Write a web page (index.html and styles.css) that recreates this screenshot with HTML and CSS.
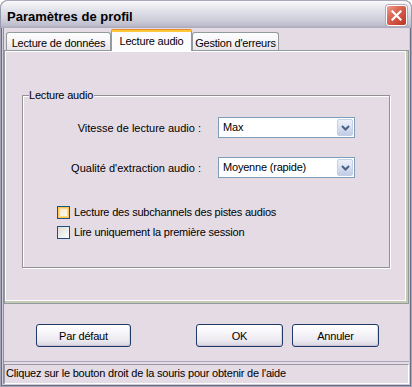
FILE: index.html
```
<!DOCTYPE html>
<html lang="fr">
<head>
<meta charset="utf-8">
<title>Paramètres de profil</title>
<link rel="stylesheet" href="styles.css">
</head>
<body>
<div class="window">
  <div class="titlebar">
    <span class="title">Paramètres de profil</span>
    <span class="close">
      <svg width="11" height="11" viewBox="0 0 11 11"><path d="M1.5 1.5 L9.5 9.5 M9.5 1.5 L1.5 9.5" stroke="#fff" stroke-width="2.2" stroke-linecap="square" fill="none"/></svg>
    </span>
  </div>
  <div class="frame">
    <div class="tabs">
      <div class="tab tab-data">Lecture de données</div>
      <div class="tab tab-active">Lecture audio</div>
      <div class="tab tab-errors">Gestion d'erreurs</div>
    </div>
    <div class="panel">
      <fieldset class="group">
        <legend class="group-title">Lecture audio</legend>
        <div class="fields">
          <span class="field-label">Vitesse de lecture audio :</span>
          <div class="select">
            <span class="select-value">Max</span>
            <span class="select-btn"><svg width="9" height="6" viewBox="0 0 9 6"><path d="M1 1 L4.5 4.5 L8 1" stroke="#4d6185" stroke-width="2" fill="none"/></svg></span>
          </div>
          <span class="field-label">Qualité d'extraction audio :</span>
          <div class="select">
            <span class="select-value">Moyenne (rapide)</span>
            <span class="select-btn"><svg width="9" height="6" viewBox="0 0 9 6"><path d="M1 1 L4.5 4.5 L8 1" stroke="#4d6185" stroke-width="2" fill="none"/></svg></span>
          </div>
        </div>
        <div class="checks">
          <div class="check"><span class="box box-hover"></span><span class="check-text">Lecture des subchannels des pistes audios</span></div>
          <div class="check"><span class="box"></span><span class="check-text">Lire uniquement la première session</span></div>
        </div>
      </fieldset>
    </div>
    <div class="buttons">
      <button class="btn btn-wide">Par défaut</button>
      <div class="btn-group">
        <button class="btn">OK</button>
        <button class="btn">Annuler</button>
      </div>
    </div>
    <div class="statusbar">
      <div class="status">Cliquez sur le bouton droit de la souris pour obtenir de l'aide</div>
    </div>
  </div>
</div>
</body>
</html>
```
FILE: styles.css
```
* { box-sizing: border-box; }
html, body { margin: 0; padding: 0; background: #fff; }
body {
  font-family: "Liberation Sans", Arial, sans-serif;
  font-size: 11px;
  letter-spacing: -0.2px;
  color: #000;
}
.window {
  width: 412px;
  height: 387px;
  display: flex;
  flex-direction: column;
}
.titlebar {
  height: 28px;
  flex: none;
  display: flex;
  align-items: flex-start;
  padding: 0 5px 0 7px;
  border-radius: 8px 8px 0 0;
  background: linear-gradient(#fdfdfe 0%, #eeeef3 18%, #dddde6 45%, #cfcfdb 70%, #bdbdcc 90%, #a9a9bb 100%);
  box-shadow: inset 1px 0 0 #9a9aae, inset -1px 0 0 #9a9aae, inset 0 1px 0 #a9a9bb;
}
.title {
  margin-top: 9px;
  line-height: 15px;
  font-size: 13px;
  font-weight: bold;
  letter-spacing: 0;
  color: #000;
}
.close {
  margin-left: auto;
  margin-top: 5px;
  width: 21px;
  height: 21px;
  border: 1px solid #fff;
  border-radius: 3px;
  background: linear-gradient(135deg, #f0a090 0%, #dd6a58 35%, #c94636 75%, #b83428 100%);
  box-shadow: 0 0 0 1px #b8a8b8;
  display: flex;
  align-items: center;
  justify-content: center;
}
.frame {
  flex: 1;
  display: flex;
  flex-direction: column;
  background: #e4dbe4;
  padding: 2px 3px 3px 4px;
  box-shadow:
    inset 1px 0 0 #a4a4b8, inset -1px 0 0 #a4a4b8, inset 0 -1px 0 #a4a4b8,
    inset 2px 0 0 #6c6c84, inset -2px 0 0 #6c6c84, inset 0 -2px 0 #6c6c84,
    inset 3px 0 0 #cfcbd6, inset -3px 0 0 #cfcbd6, inset 0 -3px 0 #cfcbd6,
    inset 4px 0 0 #8f8fa2;
}
.tabs {
  height: 20px;
  display: flex;
  align-items: flex-end;
  padding-left: 2px;
}
.tab {
  flex: none;
  height: 18px;
  padding-top: 2px;
  line-height: 16px;
  text-align: center;
  white-space: nowrap;
  border: 1px solid #919b9c;
  border-bottom: none;
  border-radius: 3px 3px 0 0;
  background: linear-gradient(#fefefe, #f6f4f7 50%, #e8e4ea);
}
.tab-data { width: 105px; }
.tab-errors { width: 87px; }
.tab-active {
  width: 81px;
  height: 21px;
  margin-bottom: -1px;
  padding-top: 2px;
  line-height: 14px;
  position: relative;
  z-index: 1;
  background: #fcfcfe;
  border-top: 2px solid #ffc83c;
  box-shadow: 0 -1px 0 #e68b2c;
  border-radius: 2px 2px 0 0;
}
.panel {
  height: 254px;
  flex: none;
  border: 1px solid #919b9c;
  padding: 38px 18px 0 17px;
  background: #e4dbe4;
  box-shadow: inset -2px -2px 0 #c6c9b3, inset -3px -3px 0 #fff, inset 1px 1px 0 #fff;
}
.group {
  margin: 0;
  min-width: 0;
  padding: 15px 0 28px 0;
  border: 1px solid #919191;
  box-shadow: inset 1px 1px 0 #fff, 1px 1px 0 #fff;
}
.group-title {
  margin-left: 6px;
  padding: 0 1px 0 0;
  line-height: 13px;
  background: #e4dbe4;
}
.fields {
  display: grid;
  grid-template-columns: 178px 137px;
  column-gap: 17px;
  row-gap: 19px;
  align-items: center;
}
.field-label {
  justify-self: end;
  white-space: nowrap;
  letter-spacing: 0;
}
.select {
  height: 21px;
  display: flex;
  border: 1px solid #7f9db9;
  background: #fff;
}
.select-value {
  flex: 1;
  padding-left: 4px;
  line-height: 19px;
  white-space: nowrap;
}
.select-btn {
  width: 16px;
  margin: 1px;
  border-radius: 2px;
  border: 1px solid #c3d0e6;
  background: linear-gradient(#eef1fa, #d9e0f0 50%, #c2cde4);
  display: flex;
  align-items: center;
  justify-content: center;
}
.checks {
  margin-top: 28px;
  margin-left: 34px;
  display: flex;
  flex-direction: column;
  gap: 7px;
}
.check {
  display: flex;
  align-items: flex-start;
  gap: 4px;
  height: 13px;
  line-height: 13px;
}
.box {
  flex: none;
  width: 13px;
  height: 13px;
  border: 1px solid #1c5180;
  background: linear-gradient(135deg, #dcdcd7, #f4f4f2 70%, #fff);
}
.box-hover {
  background: linear-gradient(135deg, #f4e4c0, #fbf5e8 70%, #fff);
  box-shadow: inset 0 0 0 1px #fcc55a, inset 0 0 0 2px #fbd98a;
}
.check-text { white-space: nowrap; }
.buttons {
  display: flex;
  margin-top: 20px;
  height: 23px;
  padding: 0 30px 0 32px;
}
.btn {
  height: 23px;
  width: 87px;
  padding: 0;
  font-family: "Liberation Sans", Arial, sans-serif;
  font-size: 11px;
  letter-spacing: -0.2px;
  color: #000;
  border: 1px solid #1f3a64;
  border-radius: 3px;
  background: linear-gradient(#ffffff 0%, #f7f6f9 35%, #ebe8ef 75%, #d9d5e2 100%);
  box-shadow: inset 0 -1px 0 #c7c2d6, inset -1px 0 0 #dcd8e4;
}
.btn-wide { width: 95px; }
.btn-group {
  margin-left: auto;
  display: flex;
  gap: 9px;
}
.statusbar {
  margin-top: 14px;
  border-top: 1px solid #a8a6b6;
  padding-top: 2px;
}
.status {
  height: 20px;
  padding: 0 0 1px 1px;
  line-height: 17px;
  white-space: nowrap;
  border-top: 1px solid #9a98a8;
  border-left: 1px solid #9a98a8;
  border-bottom: 1px solid #fff;
  border-right: 1px solid #fff;
}
```
